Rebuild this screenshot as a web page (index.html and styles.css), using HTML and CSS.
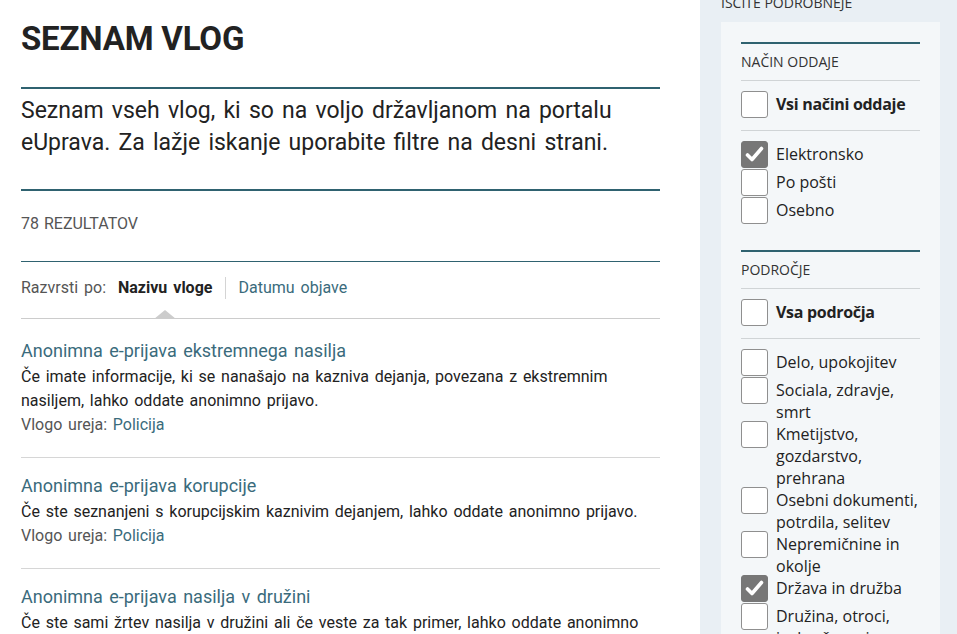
FILE: index.html
```html
<!DOCTYPE html>
<html lang="sl">
<head>
<meta charset="utf-8">
<title>Seznam vlog</title>
<link rel="stylesheet" href="styles.css">
</head>
<body>
<div class="page">
  <main class="main">
    <h1 class="title">SEZNAM VLOG</h1>
    <p class="lead">Seznam vseh vlog, ki so na voljo državljanom na portalu eUprava. Za lažje iskanje uporabite filtre na desni strani.</p>
    <div class="count">78 REZULTATOV</div>
    <div class="sort">
      <span class="sort-label">Razvrsti po:</span>
      <span class="sort-opt active">Nazivu vloge</span>
      <span class="sort-sep"></span>
      <a class="sort-opt link" href="#">Datumu objave</a>
    </div>
    <ul class="results">
      <li class="result first">
        <a class="result-title" href="#">Anonimna e-prijava ekstremnega nasilja</a>
        <p class="result-desc">Če imate informacije, ki se nanašajo na kazniva dejanja, povezana z ekstremnim nasiljem, lahko oddate anonimno prijavo.</p>
        <p class="result-owner">Vlogo ureja: <a href="#">Policija</a></p>
      </li>
      <li class="result">
        <a class="result-title" href="#">Anonimna e-prijava korupcije</a>
        <p class="result-desc">Če ste seznanjeni s korupcijskim kaznivim dejanjem, lahko oddate anonimno prijavo.</p>
        <p class="result-owner">Vlogo ureja: <a href="#">Policija</a></p>
      </li>
      <li class="result">
        <a class="result-title" href="#">Anonimna e-prijava nasilja v družini</a>
        <p class="result-desc">Če ste sami žrtev nasilja v družini ali če veste za tak primer, lahko oddate anonimno prijavo.</p>
        <p class="result-owner">Vlogo ureja: <a href="#">Policija</a></p>
      </li>
    </ul>
  </main>
  <aside class="sidebar">
    <h2 class="side-heading">IŠČITE PODROBNEJE</h2>
    <div class="panel">
      <section class="filter">
        <h3 class="filter-title">NAČIN ODDAJE</h3>
        <div class="filter-all">
          <div class="check"><span class="box"></span><span class="label strong">Vsi načini oddaje</span></div>
        </div>
        <div class="options">
          <div class="check"><span class="box checked"><svg viewBox="0 0 27 27" width="27" height="27"><path d="M6.5 14 L11 18.5 L20.5 7.5" fill="none" stroke="#fff" stroke-width="3.6" stroke-linecap="round" stroke-linejoin="round"/></svg></span><span class="label">Elektronsko</span></div>
          <div class="check"><span class="box"></span><span class="label">Po pošti</span></div>
          <div class="check"><span class="box"></span><span class="label">Osebno</span></div>
        </div>
      </section>
      <section class="filter">
        <h3 class="filter-title">PODROČJE</h3>
        <div class="filter-all">
          <div class="check"><span class="box"></span><span class="label strong">Vsa področja</span></div>
        </div>
        <div class="options">
          <div class="check"><span class="box"></span><span class="label">Delo, upokojitev</span></div>
          <div class="check"><span class="box"></span><span class="label">Sociala, zdravje, smrt</span></div>
          <div class="check"><span class="box"></span><span class="label">Kmetijstvo, gozdarstvo, prehrana</span></div>
          <div class="check"><span class="box"></span><span class="label">Osebni dokumenti, potrdila, selitev</span></div>
          <div class="check"><span class="box"></span><span class="label">Nepremičnine in okolje</span></div>
          <div class="check"><span class="box checked"><svg viewBox="0 0 27 27" width="27" height="27"><path d="M6.5 14 L11 18.5 L20.5 7.5" fill="none" stroke="#fff" stroke-width="3.6" stroke-linecap="round" stroke-linejoin="round"/></svg></span><span class="label">Država in družba</span></div>
          <div class="check"><span class="box"></span><span class="label">Družina, otroci, izobraževanje</span></div>
        </div>
      </section>
    </div>
  </aside>
</div>
</body>
</html>
```

FILE: styles.css
```css
* { box-sizing: border-box; }

html, body {
  margin: 0;
  padding: 0;
  background: #ffffff;
  height: 634px;
  overflow: hidden;
}

body {
  font-family: Roboto, "Liberation Sans", sans-serif;
  color: #222222;
}

a { text-decoration: none; color: #3a6b7c; }

.page {
  display: flex;
  align-items: stretch;
  height: 634px;
}

/* ---------- main column ---------- */
.main {
  width: 639px;
  margin-left: 21px;
  flex: none;
}

.title {
  margin: 0;
  padding-top: 19px;
  font-size: 33px;
  line-height: 40px;
  font-weight: 700;
  color: #222222;
  letter-spacing: -0.2px;
  margin-bottom: 28px;
}

.lead {
  margin: 0;
  border-top: 2px solid #2f6270;
  border-bottom: 2px solid #2f6270;
  padding: 6px 0 30px;
  font-size: 23px;
  line-height: 32px;
  word-spacing: 2.5px;
  color: #222222;
}

.count {
  padding: 23px 0 27px;
  font-size: 16px;
  line-height: 20px;
  word-spacing: 1px;
  color: #555555;
  border-bottom: 1px solid #2f6270;
}

.sort {
  display: flex;
  align-items: center;
  padding: 14px 0 18px;
  font-size: 16px;
  line-height: 24px;
  word-spacing: 2px;
  border-bottom: 1px solid #cccccc;
}

.sort-label { color: #555555; margin-right: 12px; }

.sort-opt.active {
  position: relative;
  font-weight: 700;
  color: #222222;
}

.sort-opt.active::after {
  content: "";
  position: absolute;
  left: 50%;
  bottom: -19px;
  margin-left: -11px;
  border-left: 11px solid transparent;
  border-right: 11px solid transparent;
  border-bottom: 9px solid #cccccc;
}

.sort-sep {
  width: 1px;
  height: 22px;
  background: #d4d4d4;
  margin: 0 12px 0 13px;
}

.sort-opt.link { color: #3a6b7c; }

.results {
  list-style: none;
  margin: 0;
  padding: 0;
}

.result {
  padding: 14px 0 20px;
  border-bottom: 1px solid #d6d6d6;
}

.result.first { padding-top: 18px; }

.result-title {
  display: block;
  font-size: 18px;
  line-height: 28px;
  word-spacing: 2px;
  color: #3a6b7c;
}

.result-desc,
.result-owner {
  margin: 0;
  font-size: 16px;
  line-height: 24px;
  word-spacing: 1.8px;
  color: #222222;
}

.result-owner { color: #555555; }
.result-owner a { color: #3a6b7c; }

/* ---------- sidebar ---------- */
.sidebar {
  flex: 1;
  margin-left: 40px;
  background: #e9eff4;
  padding: 0 17px 0 21px;
  font-family: "Open Sans", "Noto Sans", sans-serif;
}

.side-heading {
  margin: -7px 0 9px;
  font-size: 14px;
  line-height: 20px;
  font-weight: 400;
  color: #333333;
}

.panel {
  background: #f4f7f9;
  padding: 20px 20px 0;
  min-height: 620px;
}

.filter {
  border-top: 2px solid #2f6270;
  margin-bottom: 25px;
}

.filter-title {
  margin: 0;
  padding: 8px 0 8px;
  font-size: 14px;
  line-height: 20px;
  font-weight: 400;
  color: #333333;
  border-bottom: 1px solid #d0d4d6;
}

.filter-all {
  padding: 10px 0 11px;
  border-bottom: 1px solid #d0d4d6;
}

.options {
  padding-top: 10px;
}

.check {
  display: flex;
  align-items: flex-start;
  min-height: 28px;
}

.box {
  flex: none;
  width: 27px;
  height: 27px;
  border: 1px solid #8f8f8f;
  border-radius: 3px;
  background: #ffffff;
  margin-right: 8px;
  display: flex;
}

.box svg { margin: -1px; }

.box.checked {
  background: #777777;
  border-color: #777777;
}

.label {
  font-size: 16px;
  line-height: 22px;
  padding-top: 2px;
  margin-bottom: -2px;
  color: #222222;
}

.label.strong { font-weight: 700; letter-spacing: -0.3px; }
```
